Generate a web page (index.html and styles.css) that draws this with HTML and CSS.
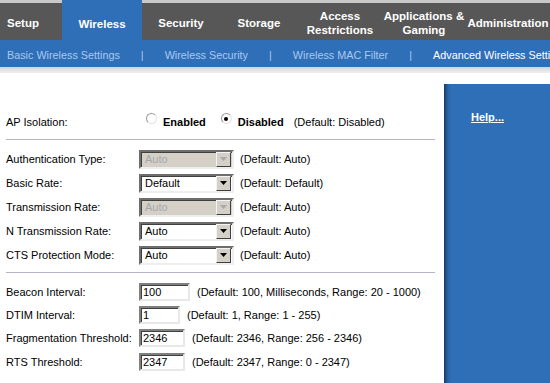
FILE: index.html
```html
<!DOCTYPE html>
<html lang="en">
<head>
  <meta charset="UTF-8" />
  <title>Advanced Wireless Settings</title>
  <link rel="stylesheet" href="styles.css">
</head>
<body>
  <div class="tabs">
    <div class="tab tab-setup">Setup</div>
    <div class="tab active">Wireless</div>
    <div class="tab">Security</div>
    <div class="tab">Storage</div>
    <div class="tab wide">Access<br />Restrictions</div>
    <div class="tab wide">Applications &amp;<br />Gaming</div>
    <div class="tab wide">Administration</div>
  </div>
  <div class="subnav">
    <span class="sub">Basic Wireless Settings</span>
    <span class="sep">|</span>
    <span class="sub">Wireless Security</span>
    <span class="sep">|</span>
    <span class="sub">Wireless MAC Filter</span>
    <span class="sep">|</span>
    <span class="sub current">Advanced Wireless Settings</span>
  </div>
  <div class="strip"></div>

  <div class="main">
    <form class="content">
      <div class="row ap-row">
        <span class="label">AP Isolation:</span>
        <span class="radios">
          <span class="radio"></span><b class="opt">Enabled</b>
          <span class="radio checked"></span><b class="opt">Disabled</b>
          <span class="note">(Default: Disabled)</span>
        </span>
      </div>
      <hr />

      <div id="selectRows"></div>
      <hr />
      <div id="inputRows"></div>
    </form>
    <div class="help">
      <a href="#">Help...</a>
    </div>
  </div>

  <script>
    const selects = [
      ['Authentication Type:', 'Auto', true, '(Default: Auto)'],
      ['Basic Rate:', 'Default', false, '(Default: Default)'],
      ['Transmission Rate:', 'Auto', true, '(Default: Auto)'],
      ['N Transmission Rate:', 'Auto', false, '(Default: Auto)'],
      ['CTS Protection Mode:', 'Auto', false, '(Default: Auto)']
    ];
    const inputs = [
      ['Beacon Interval:', '100', 51, '(Default: 100, Milliseconds, Range: 20 - 1000)'],
      ['DTIM Interval:', '1', 41, '(Default: 1, Range: 1 - 255)'],
      ['Fragmentation Threshold:', '2346', 46, '(Default: 2346, Range: 256 - 2346)'],
      ['RTS Threshold:', '2347', 46, '(Default: 2347, Range: 0 - 2347)']
    ];

    const selectRows = document.getElementById('selectRows');
    selects.forEach(([label, value, disabled, note]) => {
      const row = document.createElement('div');
      row.classList.add('row', 'select-row');
      row.innerHTML = `<span class="label">${label}</span>
        <span class="select${disabled ? ' disabled' : ''}">
          <span class="value">${value}</span>
          <span class="arrow"><svg width="7" height="4" viewBox="0 0 7 4"><path d="M0 0h7L3.5 4z" /></svg></span>
        </span>
        <span class="note">${note}</span>`;
      selectRows.appendChild(row);
    });

    const inputRows = document.getElementById('inputRows');
    inputs.forEach(([label, value, width, note]) => {
      const row = document.createElement('div');
      row.classList.add('row', 'input-row');
      row.innerHTML = `<span class="label">${label}</span>
        <input type="text" value="${value}" style="width: ${width}px" />
        <span class="note">${note}</span>`;
      inputRows.appendChild(row);
    });
  </script>
</body>
</html>
```

FILE: styles.css
```css
body {
  margin: 0;
  width: 550px;
  height: 383px;
  overflow: hidden;
  background: #fff;
  font-family: "Liberation Sans", Arial, sans-serif;
  font-size: 11px;
  color: #000;
}
.tabs {
  display: flex;
  height: 40px;
  background: #575757;
  white-space: nowrap;
}
.tab {
  display: flex;
  align-items: center;
  justify-content: center;
  box-sizing: border-box;
  height: 40px;
  width: 78px;
  padding-top: 2px;
  border-top: 3px solid #c9c9c9;
  color: #fff;
  font-weight: bold;
  font-size: 11.5px;
  line-height: 14px;
  text-align: center;
  flex-shrink: 0;
}
.tab-setup {
  width: 62px;
  justify-content: flex-start;
  padding-left: 7px;
}
.tab.active {
  width: 80px;
  background: #2f6fb7;
  border-top-color: #2f6fb7;
  padding-top: 5px;
}
.tab.wide {
  width: 84px;
}
.subnav {
  display: flex;
  align-items: center;
  height: 27px;
  padding: 2px 0 0 7px;
  box-sizing: border-box;
  background: #2f6fb7;
  color: #a9c9f0;
  font-size: 10.8px;
  white-space: nowrap;
  overflow: hidden;
}
.sep {
  margin: 0 21px;
}
.current {
  color: #fff;
}
.strip {
  height: 6px;
  background: linear-gradient(#d4d4d4, #f0f0f0);
}
.main {
  display: flex;
  align-items: flex-start;
}
.content {
  width: 444px;
  flex-shrink: 0;
  box-sizing: border-box;
  padding: 37px 9px 0 6px;
  margin: 0;
}
hr {
  border: none;
  border-top: 1px solid #b5b5c9;
  margin: 5px 0 0;
}
.row {
  display: flex;
  align-items: center;
  white-space: nowrap;
}
.label {
  width: 133px;
  flex-shrink: 0;
}
.ap-row {
  height: 24px;
}
.radios {
  display: flex;
  align-items: center;
  padding-left: 7px;
}
.radio {
  width: 9px;
  height: 9px;
  border-radius: 50%;
  border: 1px solid #9a9a9a;
  border-right-color: #e4e4e4;
  border-bottom-color: #e4e4e4;
  background: #fff;
  margin-top: -7px;
  position: relative;
}
.radio.checked::after {
  content: "";
  position: absolute;
  left: 2.5px;
  top: 2.5px;
  width: 4px;
  height: 4px;
  border-radius: 50%;
  background: #000;
}
.opt {
  margin-left: 6px;
  margin-right: 15px;
}
.opt + .note {
  margin-left: -5px;
}
#selectRows {
  padding-top: 7px;
}
.select-row {
  height: 24px;
}
.select {
  display: flex;
  align-items: center;
  justify-content: space-between;
  box-sizing: border-box;
  width: 95px;
  height: 19px;
  border: 2px solid;
  border-color: #6e6e6e #eeeeee #eeeeee #6e6e6e;
  box-shadow: inset 1px 1px 0 #404040;
  background: #fff;
  padding: 0 1px 0 4px;
  margin-right: 6px;
}
.select .arrow {
  display: flex;
  align-items: center;
  justify-content: center;
  box-sizing: border-box;
  width: 15px;
  height: 15px;
  background: #d4d0c8;
  border: 1px solid;
  border-color: #f4f4f4 #404040 #404040 #f4f4f4;
}
.select.disabled {
  background: #d4d0c8;
  color: #a8a8a8;
}
.select.disabled .arrow svg {
  fill: #a8a8a8;
}
#inputRows {
  padding-top: 7px;
}
.input-row {
  height: 23.4px;
}
input {
  box-sizing: border-box;
  height: 18px;
  margin: 0 7px 0 0;
  padding: 0 2px;
  font-family: "Liberation Sans", Arial, sans-serif;
  font-size: 11px;
  border: 2px solid;
  border-color: #808080 #e8e8e8 #e8e8e8 #808080;
  box-shadow: inset 1px 1px 0 #404040;
  outline: none;
}
.help {
  flex: 1;
  height: 299px;
  margin-top: 11px;
  background: linear-gradient(to right, #173a63, #2a64a6 4px, #2f6fb7 7px);
  padding: 27px 0 0 27px;
  box-sizing: border-box;
}
.help a {
  color: #fff;
  font-weight: bold;
  font-size: 11px;
}
```
